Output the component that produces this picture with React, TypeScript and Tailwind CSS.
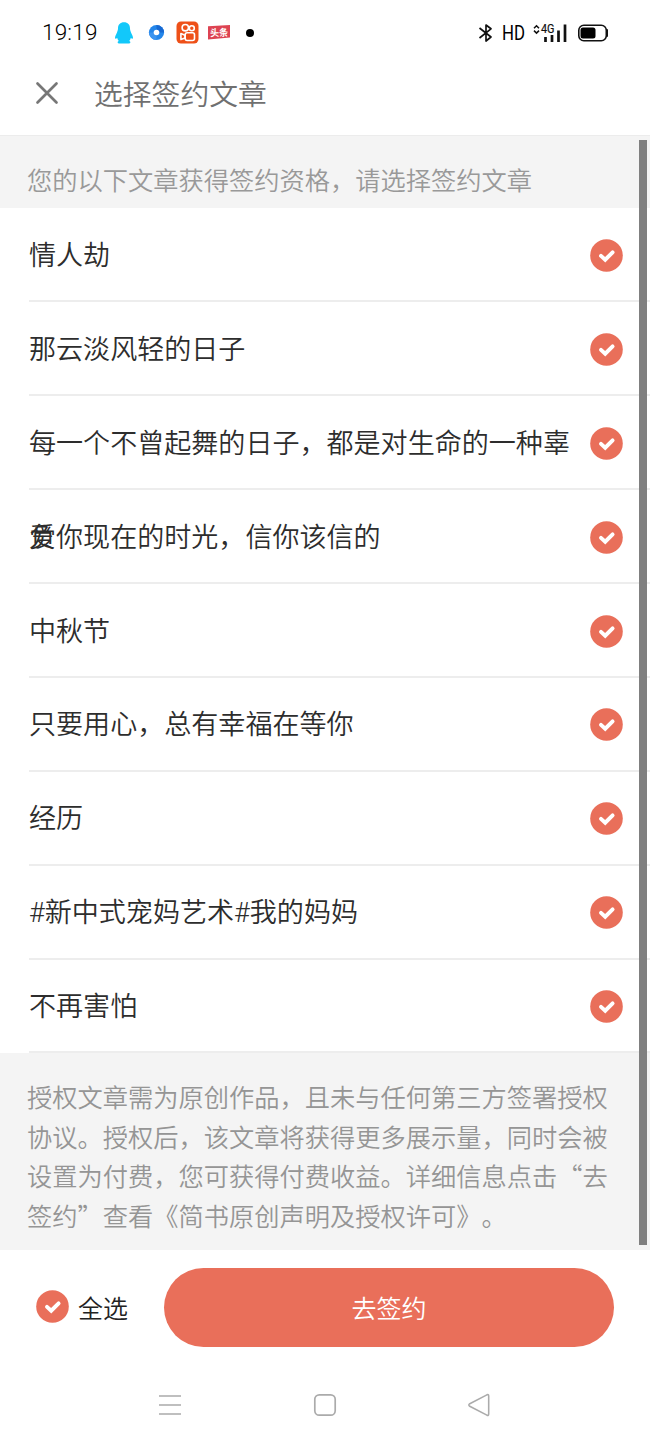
import React from "react";

const articles: string[] = [
  "情人劫",
  "那云淡风轻的日子",
  "每一个不曾起舞的日子，都是对生命的一种辜负",
  "爱你现在的时光，信你该信的",
  "中秋节",
  "只要用心，总有幸福在等你",
  "经历",
  "#新中式宠妈艺术#我的妈妈",
  "不再害怕",
];

const notice = [
  "授权文章需为原创作品，且未与任何第三方签署授权",
  "协议。授权后，该文章将获得更多展示量，同时会被",
  "设置为付费，您可获得付费收益。详细信息点击“去",
  "签约”查看《简书原创声明及授权许可》。",
];

function Check() {
  return (
    <svg className="block size-[33px] shrink-0" viewBox="0 0 33 33" fill="none">
      <circle cx="16.5" cy="16.5" r="16.3" fill="#e96f5a" />
      <path d="M11 16.9 L15.2 20.7 L22.6 13.3" stroke="#fff" strokeWidth="3.9" strokeLinecap="round" strokeLinejoin="miter" />
    </svg>
  );
}

function StatusBar() {
  return (
    <div className="flex h-[65px] shrink-0 items-center text-black">
      <span className="ml-[42px] w-[72px] font-['Roboto'] text-[22.5px] font-[350] leading-none tracking-[0.2px]">19:19</span>
      <svg className="h-[22px] w-[20px]" viewBox="0 0 20 22">
        <path d="M10 .3C6.200.3 4 2.600 4 6.500c0 1.500-.5 2.700-1.100 4.200C1.900 12.800 1 14.300 1 15.700c0 .9.5 1.300 1.300.8l.9-.6c.3 1.300.9 2.300 1.600 3.200-.8.2-1.200.7-1.200 1.200 0 .9.8 1.200 2.400 1.200h8c1.600 0 2.400-.3 2.400-1.200 0-.5-.4-1-1.200-1.200.7-.9 1.300-1.900 1.600-3.200l.9.600c.8.5 1.300.1 1.300-.8 0-1.400-.9-2.900-1.900-5C16.500 9.200 16 8 16 6.500 16 2.600 13.800.3 10 .3z" fill="#12c8fa" />
      </svg>
      <svg className="ml-[14px] size-[17px]" viewBox="0 0 17 17">
        <circle cx="8.500" cy="8.500" r="7.600" fill="#2386ea" />
        <path d="M8.500.9a7.600 7.600 0 0 1 7.600 7.600L11 8.500 8.500 5z" fill="#1769d2" />
        <path d="M8.500 16.100A7.600 7.600 0 0 1 .9 8.500L6 8.500 8.500 12z" fill="#3b94f0" />
        <circle cx="8.500" cy="8.500" r="2.800" fill="#fff" />
      </svg>
      <svg className="ml-[11px] size-[23px]" viewBox="0 0 23 23" fill="none" stroke="#fff" strokeWidth="1.600">
        <rect x=".5" y=".5" width="22" height="22" rx="4.500" fill="#ee5018" stroke="none" />
        <circle cx="9.300" cy="6.700" r="3.200" />
        <circle cx="15.800" cy="7.200" r="2.500" />
        <rect x="9.200" y="11.700" width="9.300" height="7.800" rx="2" />
        <path d="M9 14.200 4.900 12.600v6L9 16.900z" strokeLinejoin="round" />
      </svg>
      <svg className="ml-[8px] h-[17px] w-[24px]" viewBox="0 0 24 17">
        <path d="M1 2.200 23 1v12.600L1 15.500z" fill="#dd4352" />
        <text x="3" y="12.200" fontSize="9.800" fontWeight="700" fill="#fff" fontFamily="'Noto Sans CJK SC', sans-serif" transform="rotate(-2 12 8)" textLength="18" lengthAdjust="spacingAndGlyphs">头条</text>
      </svg>
      <span className="ml-[15px] size-[8px] rounded-full bg-black" />
      <div className="ml-auto mr-[41px] flex items-center">
        <svg className="h-[20px] w-[15px]" viewBox="0 0 15 20" fill="none" stroke="#111" strokeWidth="1.700" strokeLinejoin="round">
          <path d="M1.500 5 13 14 8 18V2l5 3.800L1.500 15" />
        </svg>
        <span className="ml-[9px] w-[30px] origin-left scale-x-[0.84] whitespace-nowrap font-['Roboto'] text-[20px] font-normal leading-none">HD</span>
        <svg className="h-[20px] w-[36px]" viewBox="0 0 36 20">
          <path d="M2 5.200 4.500 2.700 7 5.200M2 7.600l2.500 2.500L7 7.600" fill="none" stroke="#111" strokeWidth="1.500" />
          <text x="9" y="10" fontSize="12" fontWeight="400" fill="#111" stroke="#111" strokeWidth=".2" fontFamily="Roboto, sans-serif" textLength="13.500" lengthAdjust="spacingAndGlyphs">4G</text>
          <path d="M13.500 14v5M20 12v7M26.500 7.500V19M33 1.500V19" stroke="#111" strokeWidth="2.700" />
        </svg>
        <svg className="ml-[9px] h-[18px] w-[32px]" viewBox="0 0 32 18">
          <rect x="1.800" y="1.300" width="27.500" height="15.400" rx="5" fill="none" stroke="#111" strokeWidth="1.600" />
          <rect x="3.500" y="3.500" width="15" height="11" rx="2.500" fill="#000" />
          <path d="M30 6v6" stroke="#111" strokeWidth="2" strokeLinecap="round" />
        </svg>
      </div>
    </div>
  );
}

export default function App() {
  return (
    <div className="relative flex h-[1444px] w-[650px] flex-col overflow-hidden bg-white font-['Noto_Sans_CJK_SC',sans-serif] font-[350] [text-spacing-trim:space-all]">
      <StatusBar />
      <header className="flex h-[70px] shrink-0 items-center pb-[14px] pl-[35px]">
        <svg className="size-[24px]" viewBox="0 0 24 24" stroke="#777" strokeWidth="2.700" strokeLinecap="round">
          <path d="M2.500 2.500 21.500 21.500M21.500 2.500 2.500 21.500" />
        </svg>
        <h1 className="ml-[35px] text-[28.800px] leading-none text-[#707070]">选择签约文章</h1>
      </header>

      <main className="relative flex h-[1115px] shrink-0 flex-col bg-[#f4f4f4]">
        <p className="h-[73px] shrink-0 border-t border-[#ececec] pl-[27px] pt-[24px] text-[25.250px] leading-[38px] text-[#999]">
          您的以下文章获得签约资格，请选择签约文章
        </p>
        <ul className="flex h-[845px] shrink-0 flex-col bg-white pt-[0.600px]">
          {articles.map((title) => (
            <li key={title} className="ml-[29px] flex h-[93.880px] shrink-0 items-start border-b-2 border-[#ededed] pr-[27px]">
              <span className="mt-[1.500px] h-full w-[545px] font-['Roboto','Noto_Sans_CJK_SC',sans-serif] text-[27.050px] leading-[93.880px] text-[#2d2d2d]">{title}</span>
              <span className="ml-auto self-center pt-[2px]"><Check /></span>
            </li>
          ))}
        </ul>
        <div className="pl-[27px] pt-[24px] text-[25.250px] leading-[39.700px] text-[#959595]">
          {notice.map((line) => (
            <p key={line} className="whitespace-nowrap">{line}</p>
          ))}
        </div>
        <div className="absolute right-[3px] top-[5px] h-[1105px] w-[8px] bg-[#808080]" />
      </main>

      <footer className="flex h-[115px] shrink-0 items-center pl-[36px]">
        <span className="-mt-[3px]"><Check /></span>
        <span className="-mt-[1px] ml-[9px] w-[86px] text-[25px] leading-none text-[#222]">全选</span>
        <button className="h-[79px] w-[450px] rounded-full bg-[#e96f5a] text-[25px] text-white">去签约</button>
      </footer>

      <nav className="flex h-[79px] items-center pl-[158px]">
        <svg className="size-[24px]" viewBox="0 0 24 24" stroke="#ababab" strokeWidth="1.700">
          <path d="M1 3h22M1 12h22M1 21h22" />
        </svg>
        <svg className="ml-[131px] size-[24px]" viewBox="0 0 24 24" fill="none" stroke="#ababab" strokeWidth="1.700">
          <rect x="1.800" y="1.800" width="20.400" height="20.400" rx="4.500" />
        </svg>
        <svg className="ml-[130px] size-[24px]" viewBox="0 0 24 26" fill="none" stroke="#ababab" strokeWidth="1.700">
          <path d="M2 11.600 20.500 2q2-.8 2 1.300v19.400q0 2.100-2 1.300L2 14.400q-2-1.400 0-2.800z" />
        </svg>
      </nav>
    </div>
  );
}
